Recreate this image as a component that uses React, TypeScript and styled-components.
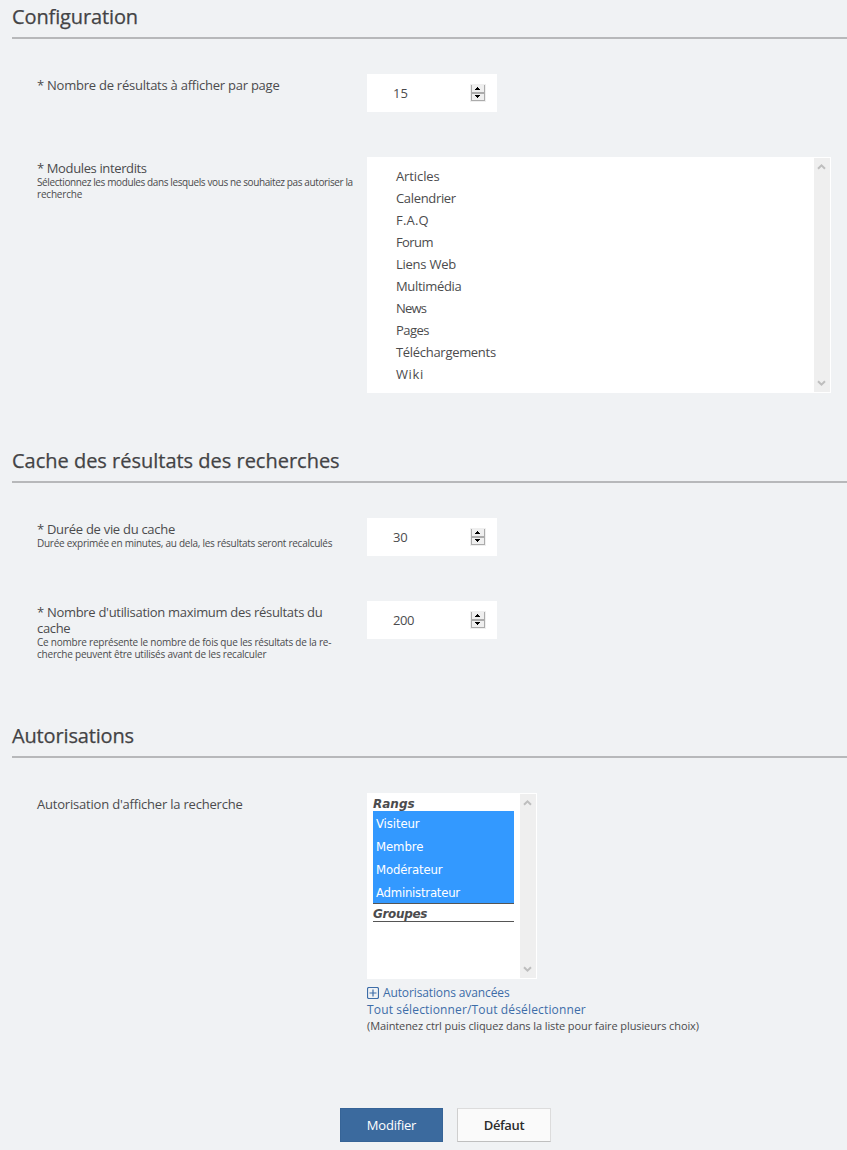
import React from 'react';
import styled, { createGlobalStyle, css } from 'styled-components';

const GlobalStyle = createGlobalStyle`
  * { box-sizing: border-box; }
  body {
    margin: 0;
    background: #f0f2f4;
    color: #4b4b4d;
    font-family: 'Open Sans', 'Noto Sans', sans-serif;
    font-size: 13px;
    line-height: 16px;
    overflow: hidden;
  }
`;

interface Tracked { $track?: number }
const tracking = css<Tracked>`
  letter-spacing: ${({ $track = 0 }) => $track}px;
  font-kerning: normal;
  white-space: nowrap;
`;

const Page = styled.main`
  height: 1150px;
  padding-left: 12px;
  overflow: hidden;
`;

const Fieldset = styled.section<{ $height: number }>`
  height: ${({ $height }) => $height}px;
`;

const Legend = styled.h2<Tracked>`
  ${tracking}
  height: 39px;
  margin: 0 0 35px;
  padding-top: 3px;
  border-bottom: 2px solid #b7b8ba;
  color: #434345;
  font-size: 20px;
  font-weight: 500;
  line-height: 28px;
  -webkit-text-stroke: 0.25px currentColor;
`;

const FormRow = styled.div`
  display: grid;
  grid-template-columns: 330px 1fr;
  align-items: start;
  margin: 0 0 45px 25px;
`;

const Label = styled.div`
  padding-top: 3px;
`;

const LabelLine = styled.div<Tracked>`
  ${tracking}
`;

const HintLine = styled.div<Tracked>`
  ${tracking}
  font-size: 10px;
  line-height: 12px;
`;

const NumberField = styled.div`
  display: flex;
  align-items: flex-start;
  justify-content: space-between;
  width: 130px;
  height: 38px;
  padding: 10px 11px 0 26px;
  background: #fff;
`;

const NumberValue = styled.span<Tracked>`
  ${tracking}
  padding-top: 1px;
`;

const List = styled.div<{ $width: number; $height: number }>`
  display: flex;
  justify-content: space-between;
  width: ${({ $width }) => $width}px;
  height: ${({ $height }) => $height}px;
  border: 1px solid #fff;
  background: #fff;
`;

const ScrollTrack = styled.div`
  display: flex;
  flex-direction: column;
  justify-content: space-between;
  width: 16px;
  padding: 5px 0 5px 3px;
  background: #efefef;
`;

const Options = styled.div`
  padding: 7px 0 0 28px;
`;

const Option = styled.div<Tracked>`
  ${tracking}
  line-height: 22px;
`;

const RankOptions = styled.div`
  width: 141px;
  margin-left: 5px;
`;

const GroupTitle = styled.div<Tracked>`
  font: italic bold 12px/20px 'DejaVu Sans', sans-serif;
  ${tracking}
  height: 17px;
`;

const Group = styled.div`
  border-bottom: 1px solid #555;
`;

const SelectedOption = styled.div<Tracked>`
  ${tracking}
  height: 23px;
  padding-left: 3px;
  background: #3399ff;
  color: #fff;
  font: 13px/26px 'DejaVu Sans Condensed', 'DejaVu Sans', sans-serif;
`;

const Links = styled.div`
  padding-top: 6px;
  color: #3d6da8;
  font-size: 12px;
  line-height: 16.5px;
`;

const LinkLine = styled.a<Tracked>`
  ${tracking}
  display: flex;
  align-items: center;
  gap: 4px;
  height: 16.5px;
`;

const Help = styled.div<Tracked>`
  ${tracking}
  color: #4b4b4d;
  font-size: 11px;
`;

const Actions = styled.div`
  display: flex;
  gap: 14px;
  padding: 1px 0 0 328px;
`;

const Button = styled.button<Tracked & { $primary?: boolean }>`
  ${tracking}
  width: ${({ $primary }) => ($primary ? 103 : 94)}px;
  height: 34px;
  padding: 0;
  border: 1px solid;
  border-color: ${({ $primary }) => ($primary ? '#366497' : '#dcdcdc #dcdcdc #bfbfbf #cfcfcf')};
  background: ${({ $primary }) => ($primary ? '#3b6a9e' : '#fafafa')};
  color: ${({ $primary }) => ($primary ? '#fff' : '#2c2c2c')};
  font-family: inherit;
  font-size: 13px;
  font-weight: ${({ $primary }) => ($primary ? 400 : 600)};
`;

const Spinner = () => (
  <svg width="16" height="18" shapeRendering="crispEdges">
    <rect width="16" height="18" fill="#efefef" />
    <path d="M1 1h1v16H1zM14 1h1v16h-1zM1 8h14v2H1zM1 16h14v1H1z" fill="#ababab" />
    <path d="M7 3h1v1h1v1h1v1H5V5h1V4h1zM5 11h5v1H9v1H8v1H7v-1H6v-1H5z" fill="#000" />
  </svg>
);

const Chevron = ({ down = false }: { down?: boolean }) => (
  <svg width="9" height="7" viewBox="0 0 9 7" fill="none" stroke="#bebebe" strokeWidth="2">
    <path d={down ? 'M1 1.2 4.5 4.7 8 1.2' : 'M1 5.8 4.5 2.3 8 5.8'} />
  </svg>
);

const ScrollBar = () => (
  <ScrollTrack><Chevron /><Chevron down /></ScrollTrack>
);

const PlusSquare = () => (
  <svg width="12" height="12" viewBox="0 0 12 12" fill="none" stroke="currentColor">
    <rect x="0.5" y="0.5" width="11" height="11" rx="1.5" strokeWidth="1.2" />
    <path d="M6 2.5v7M2.5 6h7" strokeWidth="1.2" />
  </svg>
);

const NumberInput = ({ value, track = 0 }: { value: string; track?: number }) => (
  <NumberField><NumberValue $track={track}>{value}</NumberValue><Spinner /></NumberField>
);

const modules: [string, number][] = [
  ['Articles', -0.1], ['Calendrier', -0.33], ['F.A.Q', 0.2], ['Forum', -0.6], ['Liens Web', -0.25],
  ['Multimédia', -0.33], ['News', -0.8], ['Pages', -0.55], ['Téléchargements', -0.3], ['Wiki', 0.6],
];

const ranks: [string, number][] = [
  ['Visiteur', -0.1], ['Membre', -0.1], ['Modérateur', -0.15], ['Administrateur', -0.23],
];

export default function App() {
  return (
    <>
      <GlobalStyle />
      <Page>
        <Fieldset $height={444}>
          <Legend $track={-0.12}>Configuration</Legend>
          <FormRow>
            <Label><LabelLine $track={-0.24}>* Nombre de résultats à afficher par page</LabelLine></Label>
            <NumberInput value="15" />
          </FormRow>
          <FormRow>
            <Label>
              <LabelLine $track={-0.37}>* Modules interdits</LabelLine>
              <HintLine $track={-0.39}>Sélectionnez les modules dans lesquels vous ne souhaitez pas autoriser la</HintLine>
              <HintLine $track={-0.2}>recherche</HintLine>
            </Label>
            <List $width={464} $height={236}>
              <Options>
                {modules.map(([name, track]) => <Option key={name} $track={track}>{name}</Option>)}
              </Options>
              <ScrollBar />
            </List>
          </FormRow>
        </Fieldset>

        <Fieldset $height={275}>
          <Legend $track={-0.01}>Cache des résultats des recherches</Legend>
          <FormRow>
            <Label>
              <LabelLine $track={-0.29}>* Durée de vie du cache</LabelLine>
              <HintLine $track={-0.26}>Durée exprimée en minutes, au dela, les résultats seront recalculés</HintLine>
            </Label>
            <NumberInput value="30" track={-0.2} />
          </FormRow>
          <FormRow>
            <Label>
              <LabelLine $track={-0.3}>* Nombre d'utilisation maximum des résultats du</LabelLine>
              <LabelLine $track={-0.35}>cache</LabelLine>
              <HintLine $track={-0.23}>Ce nombre représente le nombre de fois que les résultats de la re-</HintLine>
              <HintLine $track={-0.22}>cherche peuvent être utilisés avant de les recalculer</HintLine>
            </Label>
            <NumberInput value="200" track={-0.4} />
          </FormRow>
        </Fieldset>

        <Fieldset $height={388}>
          <Legend $track={-0.15}>Autorisations</Legend>
          <FormRow>
            <Label><LabelLine $track={-0.2}>Autorisation d'afficher la recherche</LabelLine></Label>
            <div>
              <List $width={170} $height={186}>
                <RankOptions>
                  <Group>
                    <GroupTitle>Rangs</GroupTitle>
                    {ranks.map(([name, track]) => <SelectedOption key={name} $track={track}>{name}</SelectedOption>)}
                  </Group>
                  <Group><GroupTitle $track={-0.35}>Groupes</GroupTitle></Group>
                </RankOptions>
                <ScrollBar />
              </List>
              <Links>
                <LinkLine $track={-0.12}><PlusSquare />Autorisations avancées</LinkLine>
                <LinkLine $track={0.15}>Tout sélectionner/Tout désélectionner</LinkLine>
                <Help $track={-0.1}>(Maintenez ctrl puis cliquez dans la liste pour faire plusieurs choix)</Help>
              </Links>
            </div>
          </FormRow>
        </Fieldset>

        <Actions>
          <Button $primary $track={-0.2}>Modifier</Button>
          <Button $track={-0.35}>Défaut</Button>
        </Actions>
      </Page>
    </>
  );
}
